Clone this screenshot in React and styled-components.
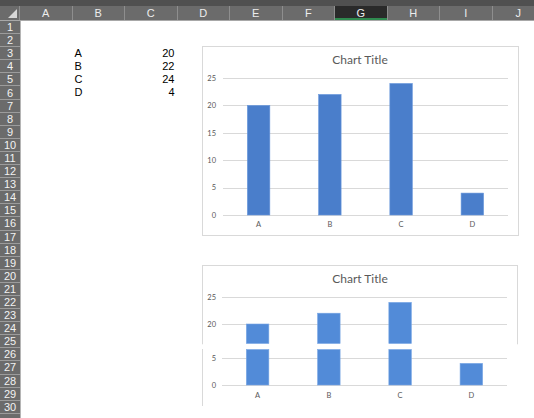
import React from "react";
import styled, { createGlobalStyle } from "styled-components";

const COLS = ["A", "B", "C", "D", "E", "F", "G", "H", "I", "J"];
const ROWS = Array.from({ length: 31 }, (_, i) => i + 1);
const DATA = [
  { label: "A", value: 20 },
  { label: "B", value: 22 },
  { label: "C", value: 24 },
  { label: "D", value: 4 }
];
const COL_W = 52.5;
const ROW_H = 13.1;
const BAR_BLUE = "#4a7ecb";
const BAR_BLUE_2 = "#528bd8";
const TEXT_GREY = "#595959";
const GRID_GREY = "#d9d9d9";

const GlobalStyle = createGlobalStyle`
  html, body {
    margin: 0;
    padding: 0;
    background: #ffffff;
  }
  body {
    font-family: "Liberation Sans", Arial, sans-serif;
  }
`;

const Sheet = styled.div`
  position: relative;
  width: 534px;
  height: 418px;
  overflow: hidden;
  background: #ffffff;
`;

const TopStrip = styled.div`
  height: 6px;
  background: #505050;
`;

const HeaderRow = styled.div`
  display: grid;
  grid-template-columns: 20px repeat(10, ${COL_W}px);
  height: 14px;
  background: #6b6b6b;
  border-bottom: 1px solid #a8a8a8;
  box-sizing: content-box;
`;

const Corner = styled.div`
  position: relative;
  border-right: 1px solid #8e8e8e;
  &::after {
    content: "";
    position: absolute;
    right: 2px;
    bottom: 2px;
    width: 0;
    height: 0;
    border-left: 9px solid transparent;
    border-bottom: 9px solid #d6d6d6;
  }
`;

const ColHeader = styled.div`
  display: flex;
  align-items: center;
  justify-content: center;
  font-size: 11px;
  color: #ededed;
  border-right: 1px solid #8e8e8e;
  box-sizing: border-box;
  background: ${(p) => (p.$active ? "#2a2a2a" : "transparent")};
  box-shadow: ${(p) => (p.$active ? "inset 0 -2px 0 #2f8a4f" : "none")};
`;

const Body = styled.div`
  display: flex;
`;

const RowHeaders = styled.div`
  display: flex;
  flex-direction: column;
  width: 20px;
  flex-shrink: 0;
  background: #6b6b6b;
  border-right: 1px solid #b5b5b5;
`;

const RowNum = styled.div`
  height: ${ROW_H}px;
  display: flex;
  align-items: center;
  justify-content: center;
  font-size: 11px;
  color: #f2f2f2;
  border-bottom: 1px solid #9c9c9c;
  box-sizing: border-box;
`;

const Cells = styled.div`
  display: grid;
  grid-template-columns: repeat(10, ${COL_W}px);
  grid-template-rows: repeat(31, ${ROW_H}px);
  margin-left: -1px;
`;

const Cell = styled.div`
  grid-row: ${(p) => p.$row};
  grid-column: ${(p) => p.$col};
  font-size: 11px;
  line-height: ${ROW_H}px;
  color: #000000;
  text-align: ${(p) => (p.$num ? "right" : "left")};
  padding: ${(p) => (p.$num ? "0 3px 0 0" : "0 0 0 2px")};
`;

const ChartBox = styled.div`
  position: absolute;
  left: 202px;
  top: ${(p) => p.$top}px;
  line-height: 0;
`;

const CHART_FONT = "Lato, 'Open Sans', sans-serif";

// plot geometry shared by both charts
const plotX = (left, i) => left + 71.25 * i + 35.6;

function ChartOne() {
  const w = 317;
  const h = 190;
  const left = 21;
  const right = 306;
  const base = 169;
  const k = 5.48;
  const gy = (v) => base - v * k;
  return (
    <svg width={w} height={h} viewBox={`0 0 ${w} ${h}`}>
      <rect x="0.5" y="0.5" width={w - 1} height={h - 1} fill="#fff" stroke={GRID_GREY} />
      <text x="158" y="18" textAnchor="middle" fontSize="12" fill={TEXT_GREY} fontFamily={CHART_FONT}>
        Chart Title
      </text>
      {[0, 5, 10, 15, 20, 25].map((v) => (
        <g key={v}>
          <line x1={left} x2={right} y1={Math.round(gy(v)) + 0.5} y2={Math.round(gy(v)) + 0.5} stroke={GRID_GREY} />
          <text x="14" y={gy(v) + 2.8} textAnchor="end" fontSize="7.5" fill={TEXT_GREY} fontFamily={CHART_FONT}>
            {v}
          </text>
        </g>
      ))}
      {DATA.map((d, i) => (
        <g key={d.label}>
          <rect
            x={plotX(left, i) - 11.25}
            y={gy(d.value)}
            width="22.5"
            height={d.value * k}
            fill={BAR_BLUE}
            stroke="#6a98dc"
            strokeWidth="0.6"
          />
          <text x={plotX(left, i)} y="181" textAnchor="middle" fontSize="7.5" fill={TEXT_GREY} fontFamily={CHART_FONT}>
            {d.label}
          </text>
        </g>
      ))}
    </svg>
  );
}

function ChartTwo() {
  const w = 316;
  const h = 141;
  const left = 20;
  const right = 305;
  const k = 5.4;
  const cutTop = 79.3;
  const cutBottom = 84;
  const gyTop = (v) => 59 - (v - 20) * k;
  const gyBot = (v) => 120 - v * k;
  return (
    <svg width={w} height={h} viewBox={`0 0 ${w} ${h}`}>
      <line x1="0" x2={w} y1="0.5" y2="0.5" stroke={GRID_GREY} />
      <line x1="0.5" x2="0.5" y1="0" y2={cutTop} stroke={GRID_GREY} />
      <line x1={w - 0.5} x2={w - 0.5} y1="0" y2={cutTop} stroke={GRID_GREY} />
      <line x1="0.5" x2="0.5" y1={cutBottom} y2={h} stroke={GRID_GREY} />
      <text x="158" y="18" textAnchor="middle" fontSize="12" fill={TEXT_GREY} fontFamily={CHART_FONT}>
        Chart Title
      </text>
      {[20, 25].map((v) => (
        <g key={v}>
          <line x1={left} x2={right} y1={Math.round(gyTop(v)) + 0.5} y2={Math.round(gyTop(v)) + 0.5} stroke={GRID_GREY} />
          <text x="14" y={gyTop(v) + 2.8} textAnchor="end" fontSize="7.5" fill={TEXT_GREY} fontFamily={CHART_FONT}>
            {v}
          </text>
        </g>
      ))}
      {[0, 5].map((v) => (
        <g key={v}>
          <line x1={left} x2={right} y1={Math.round(gyBot(v)) + 0.5} y2={Math.round(gyBot(v)) + 0.5} stroke={GRID_GREY} />
          <text x="14" y={gyBot(v) + 2.8} textAnchor="end" fontSize="7.5" fill={TEXT_GREY} fontFamily={CHART_FONT}>
            {v}
          </text>
        </g>
      ))}
      {DATA.map((d, i) => {
        const x = plotX(left, i) - 11.25;
        const tall = d.value >= 15;
        return (
          <g key={d.label}>
            {tall && (
              <rect x={x} y={gyTop(d.value)} width="22.5" height={cutTop - 0.8 - gyTop(d.value)} fill={BAR_BLUE_2} stroke="#78a6e4" strokeWidth="0.6" />
            )}
            <rect
              x={x}
              y={tall ? cutBottom + 0.5 : gyBot(d.value)}
              width="22.5"
              height={tall ? 120 - cutBottom - 0.5 : d.value * k}
              fill={BAR_BLUE_2}
              stroke="#78a6e4"
              strokeWidth="0.6"
            />
            <text x={plotX(left, i)} y="133" textAnchor="middle" fontSize="7.5" fill={TEXT_GREY} fontFamily={CHART_FONT}>
              {d.label}
            </text>
          </g>
        );
      })}
    </svg>
  );
}

export default function App() {
  return (
    <Sheet>
      <GlobalStyle />
      <TopStrip />
      <HeaderRow>
        <Corner />
        {COLS.map((c) => (
          <ColHeader key={c} $active={c === "G"}>
            {c}
          </ColHeader>
        ))}
      </HeaderRow>
      <Body>
        <RowHeaders>
          {ROWS.map((r) => (
            <RowNum key={r}>{r < 31 ? r : ""}</RowNum>
          ))}
        </RowHeaders>
        <Cells>
          {DATA.map((d, i) => (
            <React.Fragment key={d.label}>
              <Cell $row={i + 3} $col={2}>
                {d.label}
              </Cell>
              <Cell $row={i + 3} $col={3} $num>
                {d.value}
              </Cell>
            </React.Fragment>
          ))}
        </Cells>
      </Body>
      <ChartBox $top={46}>
        <ChartOne />
      </ChartBox>
      <ChartBox $top={265}>
        <ChartTwo />
      </ChartBox>
    </Sheet>
  );
}
